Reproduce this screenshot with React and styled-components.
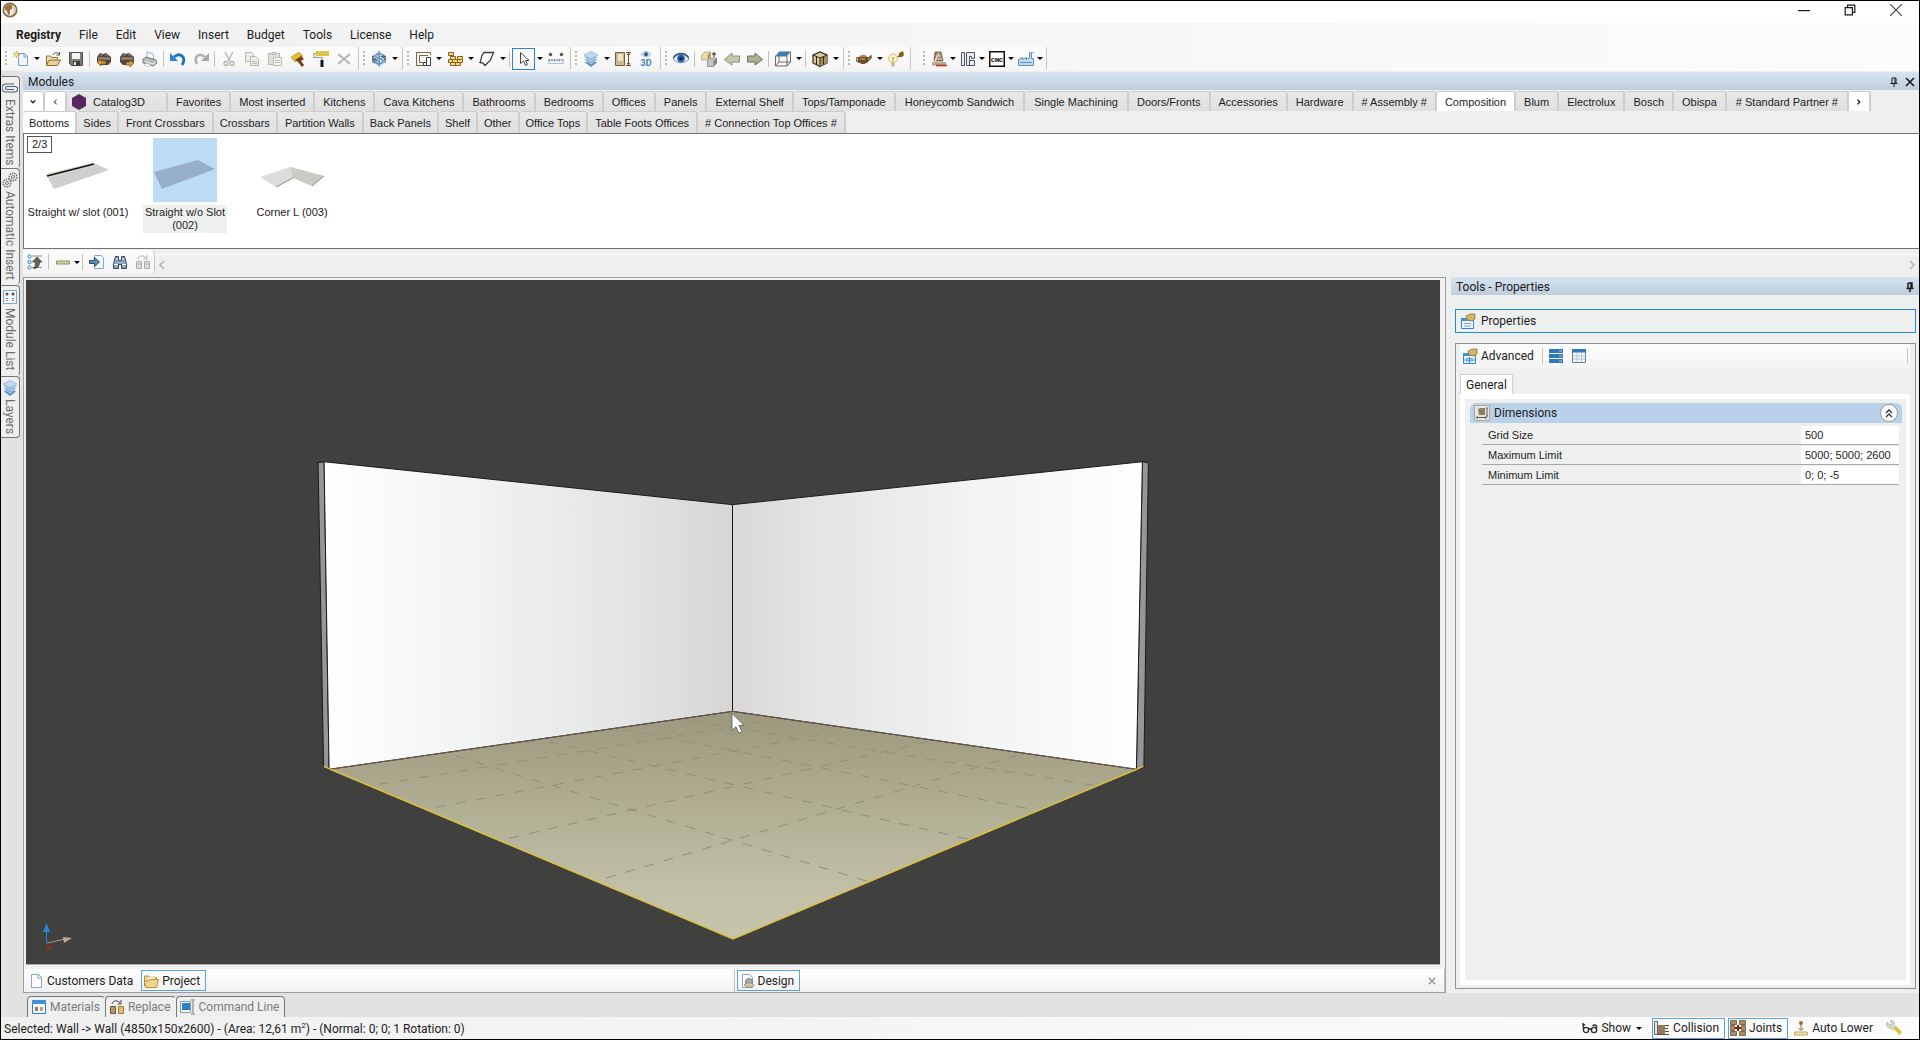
import React from "react";
import styled, { createGlobalStyle } from "styled-components";

const UI = `Roboto, "Open Sans", sans-serif`;
const SANS = `"Liberation Sans", Arial, sans-serif`;

const Global = createGlobalStyle`
  * { box-sizing: border-box; }
  body { margin: 0; background: #eef0ef; font: 12px/16px ${UI}; color: #1c1c1c; }
  button { border: 0; background: none; padding: 0; margin: 0; font: inherit; color: inherit; white-space: nowrap; }
  svg { display: block; flex: none; }
`;

/* ---------- icons ---------- */

const Blocks = ({ c }) => (
  <>
    <path d="M1 6l3-4 3 1 3-1 5 4v5l-3 3H4l-3-3z" fill="#4d4740" />
    <path d="M2 6h12v3H2z" fill="#877c6d" />
    <path d="M4 4h3M9 4h3" stroke="#a08b67" />
    <path d={c} fill="#d99a3e" stroke="#7c4a18" strokeWidth=".7" />
  </>
);

const Page = () => (
  <path d="M3.5 1.5h7l3 3v10h-10z" fill="#fbfdff" stroke="#8aa6c4" />
);

const Stack = () => (
  <>
    <path d="M8 8l6 3.500-6 4.500-6-4.500z" fill="#5e8fc0" />
    <path d="M8 5.500l6.500 3-6.500 4.500-6.500-4.500z" fill="#7ba7d4" stroke="#e4eef8" strokeWidth=".6" />
    <path d="M8 3l7 3-7 4.500L1 6z" fill="#98bce0" stroke="#e4eef8" strokeWidth=".6" />
    <path d="M8 .5l7 3.500-7 4L1 4z" fill="#c4d9ef" stroke="#7fa6ce" strokeWidth=".6" />
  </>
);

const FormIcon = () => (
  <>
    <path d="M1.500 5.500h12v10h-12z" fill="#eef6fc" stroke="#2f86cc" />
    <path d="M1 5h13v3H1z" fill="#3f93d5" />
    <path d="M4 10.500h7M4 13h7" stroke="#6fa8d6" />
    <path d="M6 3l4-2h5v5l-3 2-5-1z" fill="#d9b45f" stroke="#7d6840" strokeWidth=".7" />
  </>
);

const ICONS = {
  app: (
    <>
      <circle cx="8" cy="8" r="7.500" fill="#8d6a45" />
      <circle cx="8" cy="8" r="5.800" fill="#f5efe6" />
      <path d="M3 5l4-3 3 1v4l-2 1v4l-2 1-1-4-2-1z" fill="#9b7448" />
      <path d="M10 4c3 2 3 6 0 9" stroke="#c7a886" fill="none" />
    </>
  ),
  newdoc: (
    <>
      <path d="M5.500 2.500h6l3 3v9h-9z" fill="#eef5fc" stroke="#7c9dc0" />
      <path d="M11 2v4h4" fill="none" stroke="#7c9dc0" />
      <path d="M3.500 0v7M0 3.500h7M1 1l5 5M6 1L1 6" stroke="#d9a92e" />
      <circle cx="3.500" cy="3.500" r="1.300" fill="#fff2b0" />
    </>
  ),
  open: (
    <>
      <path d="M1.500 14V5h4l1 1.500h6V9" fill="#f6e3b4" stroke="#8b6c35" />
      <path d="M1.500 14.500L4 9h11.500l-3 5.500z" fill="#e8cf98" stroke="#8b6c35" />
      <path d="M8 4c2-3 4-3 6-1M14.500 1v3h-3" fill="none" stroke="#4a4a4a" />
    </>
  ),
  save: (
    <>
      <path d="M1.500 1.500h13v13h-11l-2-2z" fill="#7d7d78" stroke="#4d4d49" />
      <path d="M4 2h8v6H4z" fill="#f4f4f0" />
      <path d="M5 10h7v4.500H5z" fill="#3f3f3c" />
      <path d="M6 11h2v3H6z" fill="#e9e9e4" />
    </>
  ),
  blockL: <Blocks c="M1 11l4-3v2h5v3H5v2z" />,
  blockR: <Blocks c="M15 12l-4-3v2H7v3h4v2z" />,
  print: (
    <>
      <path d="M5 1l6 2 1 5-7-1z" fill="#f6fbff" stroke="#83a6c6" strokeWidth=".8" />
      <path d="M1 8l3-2 10 3 1 3-4 3-10-3z" fill="#b8b8b4" stroke="#6b6b68" strokeWidth=".8" />
      <path d="M3 10l8 3 3-2" stroke="#f4f4f0" fill="none" />
      <path d="M4 12l5 2-2 2-5-2z" fill="#fff" stroke="#8aa" strokeWidth=".5" />
    </>
  ),
  undo: (
    <>
      <path d="M4 6c6-5 13 0 8 8" fill="none" stroke="#1f72bd" strokeWidth="2.800" />
      <path d="M0 2v8h8z" fill="#2a80cc" />
    </>
  ),
  redo: (
    <>
      <path d="M12 6C6 1 0 6 4 13" fill="none" stroke="#b3b3b3" strokeWidth="2.800" />
      <path d="M16 2v8H8z" fill="#a9a9a9" />
    </>
  ),
  cut: (
    <g fill="none" stroke="#b4b4ae" strokeWidth="1.300">
      <path d="M4 1l5 9M12 1L7 10" />
      <circle cx="5" cy="12.500" r="2" />
      <circle cx="11" cy="12.500" r="2" />
    </g>
  ),
  copy: (
    <g fill="#ecece8" stroke="#b9b9af">
      <path d="M1.500 1.500h6l2 2v7h-8z" />
      <path d="M6.500 5.500h5l3 3v6h-8z" />
      <path d="M8 10.500h5M8 12.500h5" />
    </g>
  ),
  paste: (
    <g fill="#e0e0da" stroke="#b9b9af">
      <path d="M1.500 2.500h11v11h-11z" />
      <path d="M5 1.500h4v2H5z" />
      <path d="M6.500 6.500h8v8h-8z" fill="#f4f4f0" />
      <path d="M8 9.500h5M8 11.500h5" />
    </g>
  ),
  brush: (
    <>
      <path d="M1 6l8-5 4 4-8 6z" fill="#dcbf35" stroke="#a48b20" strokeWidth=".6" />
      <path d="M5 9l6-4 3 3-3 2 3 4-2 2-4-5z" fill="#7c3e1a" />
    </>
  ),
  roller: (
    <>
      <path d="M3 0h13v5H3z" fill="#dcc644" />
      <path d="M3 2.500H1v4h8v3" stroke="#9a9a9a" fill="none" strokeWidth="1.200" />
      <path d="M7.500 9h3v7h-3z" fill="#181818" />
    </>
  ),
  del: <path d="M2 3l12 10M14 3L2 13" stroke="#b4b4ae" strokeWidth="1.800" />,
  dollar: (
    <>
      <path d="M1 5l7-3 7 3v6l-7 4-7-4z" fill="#4f6072" />
      <path d="M1 7h14M1 10h14" stroke="#9fb2c5" />
      <path d="M12 4C9 2 4.500 2.500 4.500 5s7.500 2 7.500 5-5 3.500-8 1.500M8.200 0v15.500" stroke="#e6eff8" strokeWidth="3" fill="none" />
      <path d="M12 4C9 2 4.500 2.500 4.500 5s7.500 2 7.500 5-5 3.500-8 1.500M8.200 0v15.500" stroke="#5f94ca" strokeWidth="1.600" fill="none" />
    </>
  ),
  walls: (
    <>
      <path d="M15.500 4V1.500h-14v13H8M13 4.500H4.500v7H8" fill="none" stroke="#77664a" />
      <path d="M8.500 14.500v-3h3v-5h4v8zM11.500 11.500v3" fill="#fff" stroke="#3c3c3c" />
    </>
  ),
  bricks: (
    <g fill="#efd68b" stroke="#8d6415">
      <path d="M1.500 1.500h5v3h-5zM3.500 5.500h5v3h-5zM10.500 5.500h5v3h-5zM1.500 8.500h4v3h-4zM5.500 8.500h5v3h-5zM10.500 8.500h5v3h-5zM3.500 11.500h5v3h-5zM8.500 11.500h5v3h-5z" />
    </g>
  ),
  shape: <path d="M5 1.500h9.500L11.500 9 6 14.500l-2-2.500-3-.5C2.500 9 1.500 5 5 1.500z" fill="#fff" stroke="#3c3c3c" strokeWidth="1.300" />,
  pointer: <path d="M4.500 1.500v11l3-2.500 2 4.500 2-1-2-4h3.500z" fill="#fff" stroke="#444" />,
  measure: (
    <>
      <circle cx="2.500" cy="3.500" r="1.700" fill="#6d4a33" />
      <circle cx="13.500" cy="3.500" r="1.700" fill="#6d4a33" />
      <path d="M.5 8.500h15v4H.5z" fill="#f3f5f7" stroke="#b3bfcb" />
      <path d="M1 9.500h15" stroke="#3c6285" strokeDasharray="1 1.500" strokeWidth="1.500" />
    </>
  ),
  layers: <Stack />,
  height: (
    <>
      <path d="M.500 1.500h9v13h-9z" fill="#c9b98d" stroke="#6e613f" />
      <path d="M3 3h5v7H3z" fill="#efe6c6" />
      <path d="M11 1.500h5M11 14.500h5M13.500 3v10M12 4l1.500-2L15 4M12 12l1.500 2 1.500-2" stroke="#8a4a1e" fill="none" />
    </>
  ),
  threeD: (
    <>
      <path d="M3 3.500c3-4 7-4 10 0-3 3-7 3-10 0z" fill="#cfe2f4" stroke="#7ba6ce" strokeWidth=".6" />
      <circle cx="8" cy="3.300" r="2" fill="#1f5f9c" />
      <text x="8" y="15" textAnchor="middle" fontFamily="Roboto, sans-serif" fontSize="9" fontWeight="700" fill="#3f82bd">3D</text>
    </>
  ),
  eye: (
    <>
      <path d="M0 8c4-6 12-6 16 0-4 5-12 5-16 0z" fill="#e8eff6" stroke="#5d7b99" strokeWidth=".8" />
      <path d="M0 7c4-6 12-6 16 0" fill="none" stroke="#31506d" strokeWidth="1.300" />
      <circle cx="8" cy="7.500" r="3.800" fill="#1d62ad" />
      <circle cx="8" cy="7.500" r="1.700" fill="#0a2546" />
    </>
  ),
  boxes: (
    <>
      <path d="M.5 4l3-3h6v5l-3 3h-6z" fill="#ecd9ae" stroke="#a98c52" strokeWidth=".6" />
      <path d="M6.500 4l3-3v5l-3 3z" fill="#b8954f" />
      <path d="M6.500 10l3-3h6v5l-3 3.500h-6z" fill="#c4c4c4" stroke="#666" strokeWidth=".6" />
      <path d="M12.500 10l3-3v5l-3 3.500z" fill="#7d7d7d" />
      <path d="M11 3h4M13 1v5" stroke="#222" />
    </>
  ),
  left: <path d="M15.500 5H8V2L.500 8.500 8 14v-3h7.500z" fill="#c6c7ae" stroke="#8b8c78" />,
  right: <path d="M.500 5H8V2l7.500 6.500L8 14v-3H.500z" fill="#aeb08f" stroke="#6d6e58" />,
  cube: (
    <>
      <path d="M4 1h11.500L12 5H.500z" fill="#2a80cc" />
      <path d="M.500 5H12v10H.500zM4 1h11.500v10L12 15M.500 15L4 11h11.500M4 1v10" fill="none" stroke="#6e6e6e" />
    </>
  ),
  wood: (
    <>
      <path d="M1 4l7-3 7 3v8l-7 3.500L1 12z" fill="#dccb9a" stroke="#2c2a24" strokeWidth="1.200" />
      <path d="M8 7l7-3v8l-7 3.500z" fill="#a8905a" />
      <path d="M1 4l7 3 7-3M8 7v8M4.500 5.500v8M11.500 5.500v8" stroke="#2c2a24" fill="none" />
    </>
  ),
  teapot: (
    <>
      <path d="M2 6h10c1 5-2 7-5 7s-6-2-5-7z" fill="#6e4a2c" />
      <path d="M11 8l4-3v2l-4 4zM2 7C-1 6-1 10 3 11" fill="none" stroke="#6e4a2c" strokeWidth="1.300" />
      <path d="M3 6c2-3 7-3 8 0z" fill="#b08a5f" />
      <path d="M4 8h5" stroke="#d8b78c" />
    </>
  ),
  bulb: (
    <>
      <circle cx="5" cy="7.500" r="4.300" fill="#fff9dc" stroke="#dcb955" />
      <path d="M3.500 12h3v3.500h-3z" fill="#b9b39a" />
      <path d="M5 11V7M3.500 6L5 7.500 6.500 6" stroke="#c8962a" fill="none" />
      <path d="M9 6l2-2V2l4-2 1 4-2 2h-3z" fill="#8a5a1c" />
    </>
  ),
  saw: (
    <>
      <path d="M4 1h6l2 9H3z" fill="#9c8465" stroke="#5b4a33" strokeWidth=".7" />
      <path d="M2 14L8 2M5 5h5M4 8h7" stroke="#e6ddc8" strokeWidth="1.200" />
      <path d="M1 11h14v3.500H1z" fill="#bda98c" />
      <path d="M5 14.500h11" stroke="#b53424" strokeWidth="1.600" />
    </>
  ),
  plan: (
    <g fill="#eceff2" stroke="#4c5560">
      <path d="M1.500 1.500h3v13h-3zM6.500 1.500h8v6h-3v-2h-2v9h-3zM9.500 9.500h5v5h-5z" />
    </g>
  ),
  cnc: (
    <>
      <path d="M.75 .75h14.500v14.500H.75z" fill="#fff" stroke="#111" strokeWidth="1.500" />
      <text x="8" y="10.500" textAnchor="middle" fontFamily="Roboto, sans-serif" fontSize="6" fontWeight="900" fill="#111">CNC</text>
    </>
  ),
  factory: (
    <>
      <path d="M.500 14.500v-6l4-2v2l4-2v2l3-1.500V1.500h2v6h2v7z" fill="#c4dbf0" stroke="#5f8fba" />
      <path d="M2 11.500h12" stroke="#5f8fba" />
      <path d="M11 1.500h5" stroke="#8db4d6" strokeDasharray="2 1" />
    </>
  ),
  sortUp: (
    <>
      <g fill="#fff" stroke="#2a80cc">
        <circle cx="2.500" cy="2.500" r="1.600" />
        <circle cx="2.500" cy="8" r="1.600" />
        <circle cx="2.500" cy="13.500" r="1.600" />
      </g>
      <path d="M5 2h10M5 13.500h10" stroke="#8a8a8a" />
      <path d="M10 3l5 5h-2.500c0 4-2 6.500-6 6.500 2-2 2-4 2-6.500H5.500z" fill="#6b6250" stroke="#37332a" strokeWidth=".7" />
    </>
  ),
  plank: <path d="M1.500 7h13v3h-13z" fill="#d9cf9e" stroke="#97906a" />,
  goto: (
    <>
      <path d="M5.500 1.500h7l2 2v11h-9z" fill="#f2f7fc" stroke="#8aa6c4" />
      <path d="M.500 6.500h5v-3l5 4.500-5 4.500v-3h-5z" fill="#5d89b3" stroke="#2c4e6e" />
    </>
  ),
  binoc: (
    <g fill="#8fa5bf" stroke="#33475f">
      <path d="M3.500 2.500h3v4h3v-4h3l2 7v5h-5v-4h-3v4h-5v-5z" />
      <path d="M2 10.500h4M10 10.500h4M4 5h2M10 5h2" stroke="#fff" />
    </g>
  ),
  replaceOff: (
    <g fill="#dcdcda" stroke="#b0b0ae">
      <path d="M1.500 7.500h5v7h-5zM9.500 7.500h5v7h-5zM1.500 10h5M9.500 10h5" />
      <path d="M3 5c1-4 6-4 8-1M12 1v4H8.500" fill="none" />
    </g>
  ),
  hexagon: <path d="M8 0l7 4v8l-7 4-7-4V4z" fill="#56285f" />,
  clip: <path d="M12 4H4a4 4 0 000 8h9a2.700 2.700 0 000-5.500H5a1.500 1.500 0 000 3h7" fill="none" stroke="#4a607c" strokeWidth="1.200" />,
  gears: (
    <g fill="none" stroke="#7a7a7a">
      <circle cx="11" cy="5" r="3.800" strokeDasharray="1.500 .8" strokeWidth="1.600" />
      <circle cx="11" cy="5" r="1.500" />
      <circle cx="5" cy="11" r="3.800" strokeDasharray="1.500 .8" strokeWidth="1.600" />
      <circle cx="5" cy="11" r="1.500" />
    </g>
  ),
  modlist: (
    <>
      <path d="M1.500 1.500h13v13h-13z" fill="#f2f8fd" stroke="#7fa9d0" />
      <circle cx="5" cy="5" r="1.500" fill="#5d4a45" />
      <circle cx="11" cy="5" r="1.500" fill="#5d4a45" />
      <path d="M4 9.500h2M4 11.500h2M10 9.500h2M10 11.500h2" stroke="#7e8b98" />
    </>
  ),
  page: (
    <>
      <Page />
      <path d="M10 1.500v3.500h3.500" fill="none" stroke="#8aa6c4" />
    </>
  ),
  folder: (
    <>
      <path d="M1.500 13V3h4l1 1.500h7V7" fill="#f3dfae" stroke="#b8903d" />
      <path d="M4 4h8v4H4z" fill="#fff8e0" stroke="#c9a75a" strokeWidth=".6" />
      <path d="M2.500 14.500L1.500 8h4l1-1.500h9l-2 8z" fill="#f0d489" stroke="#b8903d" />
    </>
  ),
  design: (
    <>
      <Page />
      <circle cx="10" cy="9" r="3.500" fill="#a9b1b8" stroke="#6b7681" />
      <path d="M5 12c2-3 8-3 10 0-1 3-8 3-10 0z" fill="#d3c3a0" stroke="#7d7052" strokeWidth=".6" />
    </>
  ),
  materials: (
    <>
      <path d="M1.500 1.500h13v13h-13z" fill="#f2f8fd" stroke="#2a80cc" />
      <path d="M1 1h14v4H1z" fill="#3f93d5" />
      <path d="M4 8h3v4H4z" fill="#8f7a5c" />
      <path d="M9 8h3v4H9z" fill="#c9a468" />
    </>
  ),
  replace: (
    <>
      <path d="M1.500 7.500h5v7h-5z" fill="#b09a6c" stroke="#6b5a36" />
      <path d="M9.500 7.500h5v7h-5z" fill="#e0bf7e" stroke="#9b7a3a" />
      <path d="M3 5c1-4 6-4 8-1M12 1v4H8.500" fill="none" stroke="#444" />
    </>
  ),
  command: (
    <>
      <path d="M.500 2.500h10v11H.500z" fill="#fff" stroke="#8a9bab" />
      <path d="M2 4h8v7H2z" fill="#2a80cc" />
      <path d="M13 2v12M11 1h2M13 1h2M11 15h2M13 15h2" stroke="#777" />
    </>
  ),
  glasses: (
    <g fill="none" stroke="#2e2e2e" strokeWidth="1.400">
      <circle cx="4" cy="10" r="2.600" />
      <circle cx="12" cy="10" r="2.600" />
      <path d="M6.500 9.500c1-1 2-1 3 0M1.500 9L1 4l2 1M14.500 9V6c-1-1-2-2-4 0" />
    </g>
  ),
  collision: (
    <>
      <path d="M.500 1.500h3v13h-3z" fill="#e9e6df" stroke="#6f6a5e" />
      <path d="M4 5h7v9H4z" fill="#8c7c62" />
      <path d="M11 5.500h4M11 8.500h3M11 11.500h4M3 14.500h12" stroke="#5d5242" />
    </>
  ),
  joints: (
    <>
      <path d="M.500 .5h6v4h-6zM9.500 .5h6v4h-6zM.500 11.500h6v4h-6zM9.500 11.500h6v4h-6zM.500 5.500h4v5h-4zM11.500 5.500h4v5h-4z" fill="#a88c68" stroke="#6f5330" strokeWidth=".8" />
      <path d="M8 5v6M5 8h6" stroke="#7c1f1a" strokeWidth="2" />
    </>
  ),
  lower: (
    <>
      <circle cx="8" cy="3" r="2" fill="#9a6a3c" />
      <path d="M8 4v6M5.500 8L8 10.500 10.500 8" stroke="#9a6a3c" fill="none" />
      <path d="M1.500 12h13v3h-13z" fill="#f3e6a8" stroke="#b39a45" strokeWidth=".8" />
    </>
  ),
  wrench: (
    <>
      <path d="M1 2l3 3 2-2-2-2c4-1 5 2 4 4l2 2-3 3-2-2C1 9 0 5 1 2z" fill="#d7d7d2" stroke="#a3a39d" strokeWidth=".6" />
      <path d="M8 9l2.500-2.500L16 12l-2.500 3z" fill="#dcc02f" />
    </>
  ),
  props: <FormIcon />,
  advanced: (
    <>
      <FormIcon />
      <path d="M7.500 9v6M2 12h11" stroke="#3f93d5" />
    </>
  ),
  rows: (
    <>
      <path d="M1 1h14v4H1zM1 6h14v4H1zM1 11h14v4H1z" fill="#2f77b8" />
      <path d="M11 3h3M11 8h3M11 13h3" stroke="#a9cdec" />
    </>
  ),
  tableview: (
    <>
      <path d="M1.500 1.500h13v13h-13z" fill="#f5f8fb" stroke="#6a7f93" />
      <path d="M1 1h14v3.500H1z" fill="#2f77b8" />
      <path d="M6 5v9M10.500 5v9M2 8h12M2 11h12" stroke="#b6c3cf" />
    </>
  ),
  dims: (
    <>
      <path d="M.500 .5h15v15H.500z" fill="#e9e7e2" stroke="#a9a59d" />
      <path d="M4 4l2-1h5v7H5z" fill="#8f7c60" />
      <path d="M13 3v8M3 12.500h9M3 11v3M12 11v3M12 3h2M12 11h2" stroke="#5b5b5b" fill="none" />
    </>
  ),
};

const Icon = ({ name, size = 16 }) => (
  <svg width={size} height={size} viewBox="0 0 16 16" aria-hidden="true">
    {ICONS[name]}
  </svg>
);

const Glyph = ({ d, size = 10, color = "#1a1a1a", weight = 1 }) => (
  <svg width={size} height={size} viewBox="0 0 10 10" aria-hidden="true">
    <path d={d} fill="none" stroke={color} strokeWidth={weight} />
  </svg>
);

const PIN = "M3 1h4v5M3 1v5M1.500 6.500h7M5 7v3M6 1v5";
const CROSS = "M1 1l8 8M9 1l-8 8";

/* ---------- window frame ---------- */

const Window = styled.div`
  display: flex;
  flex-direction: column;
  height: 100vh;
  border: 1px solid #000;
  overflow: hidden;
`;

const TitleBar = styled.header`
  display: flex;
  justify-content: space-between;
  align-items: center;
  height: 22px;
  padding: 0 17px 4px 1px;
  background: #fff;
`;

const WindowButtons = styled.div`
  display: flex;
  gap: 34px;
`;

const MenuBar = styled.nav`
  display: flex;
  align-items: center;
  gap: 18px;
  height: 24px;
  padding: 0 15px;
  background: linear-gradient(90deg, #f0f0f0, #fcfcfc);
`;

const MenuItem = styled.button`
  font-weight: ${(p) => (p.$bold ? 700 : 400)};
`;

const ToolBar = styled.div`
  display: flex;
  height: 24px;
  background: linear-gradient(90deg, #f0f0f0, #fcfcfc);
`;

const ToolGroup = styled.div`
  position: relative;
  display: flex;
  align-items: center;
  height: 23px;
  margin-left: ${(p) => (p.$apart ? 8 : 0)}px;
  padding: 0 3px 0 8px;
  border-right: 1px solid #c6c6bf;
  border-radius: 3px;
  background: linear-gradient(#fcfcfc, #f4f4f4);

  &::before {
    content: "";
    position: absolute;
    left: 4px;
    top: 4px;
    width: 2px;
    height: 15px;
    background: repeating-linear-gradient(#bdbda6 0 2px, transparent 2px 4px);
  }
`;

const ToolButton = styled.button`
  display: flex;
  align-items: center;
  justify-content: center;
  width: 23px;
  height: 22px;
  border: 1px solid ${(p) => (p.$on ? "#2a86d1" : "transparent")};
`;

const DropButton = styled.button`
  width: ${(p) => (p.$tight ? 6 : 9)}px;
  height: 22px;
  display: flex;
  align-items: center;
  justify-content: center;

  &::before {
    content: "";
    border: 3px solid transparent;
    border-top-color: #000;
    border-bottom-width: 0;
  }
`;

const Rule = styled.span`
  width: 1px;
  height: 16px;
  margin: 0 2px;
  background: #c5c5b4;
`;

/* ---------- docks ---------- */

const Body = styled.div`
  flex: 1;
  min-height: 0;
  display: flex;
`;

const SideDock = styled.aside`
  width: 22px;
  flex: none;
  padding-top: 5px;
  background: #e2e2e2;
`;

const SideTab = styled.button`
  display: flex;
  flex-direction: column;
  align-items: center;
  gap: 3px;
  width: 19px;
  height: ${(p) => p.$h}px;
  padding-top: 3px;
  border: 1px solid #777;
  border-left: 0;
  border-bottom-color: ${(p) => (p.$last ? "#777" : "transparent")};
  border-radius: 0 4px 4px 0;
  background: #eeefee;
  color: #6d6d6d;

  span {
    writing-mode: vertical-rl;
    line-height: 14px;
  }
`;

const Content = styled.main`
  flex: 1;
  min-width: 0;
  display: flex;
  flex-direction: column;
`;

const PanelTitle = styled.h2`
  display: flex;
  align-items: center;
  gap: 6px;
  height: 18px;
  margin: ${(p) => (p.$top ? "1px 0" : "0")};
  padding: 2px 4px 0 5px;
  background: linear-gradient(#d7e4f1, #bfccdb);
  font: 12px/16px ${UI};

  span {
    flex: 1;
  }
`;

const TabRow = styled.div`
  display: flex;
  height: ${(p) => (p.$second ? 22 : 20)}px;
  font: 11px/14px ${SANS};
`;

const Tab = styled.button`
  display: flex;
  align-items: center;
  justify-content: center;
  padding: 0 ${(p) => p.$pad}px;
  border: 1px solid #cdcdcd;
  border-width: 1px 2px 0 0;
  border-radius: 3px 3px 0 0;
  background: ${(p) => (p.$on || p.$nav ? "#fff" : "linear-gradient(#e9e9e9, #dfdfdf)")};
`;

const CatalogTab = styled(Tab)`
  justify-content: flex-start;
  gap: 6px;
  width: 101px;
`;

const ModuleList = styled.section`
  display: flex;
  align-items: flex-start;
  height: 116px;
  padding: 2px 4px;
  border: 1px solid #737373;
  border-width: 1px 0 1px 1px;
  background: #fff;
  font: 11px/13px ${SANS};
`;

const Counter = styled.output`
  position: absolute;
  left: -1px;
  top: 0;
  padding: 0 4px 1px;
  border: 1px solid #555;
  background: #fff;
  line-height: 14px;
`;

const ModuleGrid = styled.div`
  position: relative;
  display: flex;
  gap: 7px;
`;

const Module = styled.button`
  display: flex;
  flex-direction: column;
  align-items: center;
  gap: 3px;
  width: 100px;
  padding-top: 2px;

  svg {
    background: ${(p) => (p.$on ? "#bcdcf4" : "transparent")};
  }

  span {
    width: ${(p) => (p.$on ? "84px" : "auto")};
    padding: 1px 0;
    min-height: 28px;
    background: ${(p) => (p.$on ? "#eef0ef" : "transparent")};
    white-space: ${(p) => (p.$on ? "normal" : "nowrap")};
  }
`;

const ModuleTools = styled.div`
  display: flex;
  height: 28px;
  padding-top: 1px;
`;

const ModuleToolGroup = styled.div`
  display: flex;
  align-items: center;
  height: 24px;
  border-right: 1px solid #c6c6bf;
  border-radius: 0 4px 4px 0;
  background: linear-gradient(#fcfcfc, #f4f4f4);
`;

const ScrollTrack = styled.div`
  flex: 1;
  display: flex;
  align-items: center;
  justify-content: space-between;
  margin-top: 4px;
  padding: 0 2px 2px;
  border-top: 1px solid #fff;
`;

/* ---------- document area ---------- */

const WorkRow = styled.div`
  flex: 1;
  min-height: 0;
  display: flex;
  gap: 5px;
`;

const DocFrame = styled.section`
  flex: 1;
  min-width: 0;
  display: flex;
  flex-direction: column;
  border: 1px solid #9d9d9d;
  background: #f1f1f1;
`;

const Viewport = styled.div`
  flex: 1;
  min-height: 0;
  margin: 2px 5px 0 2px;
  border-bottom: 1px solid #a9a9a9;
  background: #40403e;

  svg {
    width: 100%;
    height: 100%;
  }
`;

const DocTabs = styled.div`
  display: flex;
  height: 27px;
  padding-top: 4px;
`;

const DocTabGroup = styled.div`
  flex: 1 1 0;
  display: flex;
  align-items: center;
  gap: 2px;
  padding: 0 8px 0 2px;
  border-right: 1px solid #c2c2c2;
  background: linear-gradient(#fdfdfd, #f2f2f2);
`;

const LabelButton = styled.button`
  display: flex;
  align-items: center;
  gap: 3px;
  height: 21px;
  padding: 0 5px 0 1px;
  border: 1px solid ${(p) => (p.$on ? "#5aa2de" : "transparent")};
  color: #222;
`;

const Spacer = styled.span`
  flex: 1;
`;

const BottomDock = styled.div`
  display: flex;
  align-items: flex-start;
  height: 24px;
  padding: 3px 4px 0;
  background: #e2e2e2;
`;

const DockTab = styled.button`
  display: flex;
  align-items: center;
  gap: 3px;
  height: 21px;
  padding: 0 4px 0 3px;
  border: 1px solid #777;
  border-bottom: 0;
  border-right-color: ${(p) => (p.$last ? "#777" : "transparent")};
  border-radius: 4px 4px 0 0;
  background: #eeefee;
  color: #7b7b7b;
`;

const StatusBar = styled.footer`
  display: flex;
  align-items: center;
  gap: 3px;
  height: 22px;
  padding: 0 14px 0 3px;
  background: linear-gradient(90deg, #f0f0f0, #fcfcfc);

  output {
    flex: 1;
    padding-top: 1px;
  }

  sup {
    font-size: 8px;
    line-height: 0;
  }
`;

/* ---------- properties ---------- */

const Properties = styled.aside`
  display: flex;
  flex-direction: column;
  width: 468px;
  flex: none;
  padding-bottom: 4px;
`;

const PropsTitle = styled.button`
  display: flex;
  align-items: center;
  gap: 5px;
  height: 24px;
  margin: 14px 3px 10px 4px;
  padding: 0 4px;
  border: 1px solid #2a86d1;
`;

const PropsBox = styled.div`
  flex: 1;
  display: flex;
  flex-direction: column;
  margin: 0 3px 0 4px;
  padding: 0 5px 3px 4px;
  border: 1px solid #8d9196;
`;

const PropsTools = styled.div`
  display: flex;
  align-items: center;
  height: 24px;
  margin-bottom: 6px;
  background: linear-gradient(#fdfdfd, #f3f4f3);
`;

const PropsTab = styled.button`
  align-self: flex-start;
  height: 20px;
  padding: 0 5px;
  border: 1px solid #d0d0d0;
  border-bottom: 0;
  background: #fff;
`;

const PropsPage = styled.div`
  flex: 1;
  padding: 4px 4px 4px 5px;
  border: 5px solid #fff;
  border-right-width: 4px;
  background: #eef0ef;
`;

const SectionHead = styled.button`
  display: flex;
  align-items: center;
  gap: 4px;
  width: 100%;
  height: 20px;
  margin-bottom: 2px;
  padding: 0 4px;
  border-radius: 6px 6px 0 0;
  background: #b9d1e9;
`;

const Collapse = styled.span`
  display: flex;
  align-items: center;
  justify-content: center;
  width: 18px;
  height: 18px;
  border: 1px solid #9a9a9a;
  border-radius: 50%;
  background: #fff;
`;

const PropRow = styled.div`
  display: flex;
  height: 20px;
  margin: 0 3px 0 12px;
  border-bottom: 1px solid #a9a9a9;
  font: 11px/20px ${SANS};

  label {
    flex: 1;
    padding-left: 6px;
  }

  input {
    width: 98px;
    height: 18px;
    margin-top: 1px;
    padding: 0 4px;
    border: 0;
    background: #fff;
    font: inherit;
    color: inherit;
  }
`;

/* ---------- data ---------- */

const MENUS = ["Registry", "File", "Edit", "View", "Insert", "Budget", "Tools", "License", "Help"];

const TOOLS = [
  { items: ["newdoc>", "open", "save", "|", "blockL", "blockR", "print", "|", "undo", "redo", "|", "cut", "copy", "paste", "brush", "roller", "del"] },
  { items: ["dollar>"] },
  { items: ["walls>", "bricks>", "shape>", "|", "pointer*>", "measure"] },
  { items: ["layers>", "height", "threeD"] },
  { items: ["eye", "|", "boxes", "left", "right", "|", "cube>", "|", "wood>"] },
  { items: ["teapot>", "bulb"] },
  { items: ["saw>", "plan>", "cnc>", "factory>"], apart: true, tight: true },
];

const CATALOGS = [
  "Favorites", "Most inserted", "Kitchens", "Cava Kitchens", "Bathrooms", "Bedrooms", "Offices", "Panels",
  "External Shelf", "Tops/Tamponade", "Honeycomb Sandwich", "Single Machining", "Doors/Fronts", "Accessories",
  "Hardware", "# Assembly #", "Composition", "Blum", "Electrolux", "Bosch", "Obispa", "# Standard Partner #",
];

const GROUPS = [
  "Bottoms", "Sides", "Front Crossbars", "Crossbars", "Partition Walls", "Back Panels", "Shelf", "Other",
  "Office Tops", "Table Foots Offices", "# Connection Top Offices #",
];

/* Long captions get one more pixel of room on each side. */
const tabPad = (base, text) => (text.length > 14 ? base + 1 : base);

const SIDE = [
  { name: "Extras Items", icon: "clip", h: 92 },
  { name: "Automatic Insert", icon: "gears", h: 117 },
  { name: "Module List", icon: "modlist", h: 91 },
  { name: "Layers", icon: "layers", h: 62 },
];

const VALUES = [
  ["Grid Size", "500"],
  ["Maximum Limit", "5000; 5000; 2600"],
  ["Minimum Limit", "0; 0; -5"],
];

/* Floor grid lines: x1, y1, x2, y2 */
const GRID = [
  [606, 879, 1024, 754], [509, 839, 929, 742], [436, 808, 833, 733], [379, 785, 760, 723],
  [867, 882, 449, 755], [968, 840, 547, 742], [1027, 809, 625, 730], [1094, 786, 693, 722],
];

/* ---------- drawings ---------- */

const Room = () => (
  <svg viewBox="26 280 1414 685" role="img" aria-label="3D view of a room corner">
    <defs>
      <linearGradient id="wl" x1="0" x2="1">
        <stop offset="0" stopColor="#fff" />
        <stop offset=".3" stopColor="#f4f5f5" />
        <stop offset=".7" stopColor="#e5e6e6" />
        <stop offset="1" stopColor="#d7d6d5" />
      </linearGradient>
      <linearGradient id="wr" x1="0" x2="1">
        <stop offset="0" stopColor="#dad9d7" />
        <stop offset=".2" stopColor="#e3e4e4" />
        <stop offset=".6" stopColor="#f2f3f3" />
        <stop offset="1" stopColor="#fff" />
      </linearGradient>
      <linearGradient id="fl" x1="0" x2="0" y1="0" y2="1">
        <stop offset="0" stopColor="#9c987e" />
        <stop offset=".45" stopColor="#b1af94" />
        <stop offset=".8" stopColor="#c2c0a7" />
        <stop offset="1" stopColor="#c6c4ab" />
      </linearGradient>
    </defs>
    <path d="M733 712L1144 768 733 940 323 768z" fill="url(#fl)" />
    <g stroke="#8f8f77" strokeDasharray="10 10">
      {GRID.map(([a, b, c, d]) => (
        <line key={a} x1={a} y1={b} x2={c} y2={d} />
      ))}
    </g>
    <path d="M317.500 463l6-1 5 308-5.500-2z" fill="#97949b" stroke="#1a1a1a" />
    <path d="M1149 463l-6-1-6 308 7.500-2z" fill="#97949b" stroke="#1a1a1a" />
    <path d="M323.500 462l409 43v207l-404 58z" fill="url(#wl)" stroke="#1a1a1a" />
    <path d="M1143 462L732.500 505v207l404.500 58z" fill="url(#wr)" stroke="#1a1a1a" />
    <path d="M329 770l404-58 404 58" fill="none" stroke="#6a5d50" />
    <path d="M323 767l410 173 411-173" fill="none" stroke="#e0c02c" strokeWidth="1.300" />
    <path d="M732 714v17l4-3.500 3 6.500 3-1.500-3-6.500h5z" fill="#fff" stroke="#555" strokeWidth=".8" />
    <path d="M45.500 944v-14" stroke="#2a86d8" />
    <path d="M45.500 924l3.500 9h-7z" fill="#2a86d8" />
    <path d="M46 944l18-4" stroke="#a89a84" />
    <path d="M62 938l9 1-8 5z" fill="#b8ae98" />
    <path d="M45 946l4 0 3 2-3 3h-4z" fill="#7c3030" />
  </svg>
);

const Thumb = ({ children }) => (
  <svg width="64" height="64" viewBox="0 0 64 64" aria-hidden="true">
    {children}
  </svg>
);

const Tool = ({ item, tight }) => {
  if (item === "|") return <Rule />;
  const name = item.replace(/[>*]/g, "");
  return (
    <>
      <ToolButton $on={item.includes("*")} aria-label={name}>
        <Icon name={name} />
      </ToolButton>
      {item.endsWith(">") && <DropButton $tight={tight} aria-label={`${name} options`} />}
    </>
  );
};

/* ---------- page ---------- */

export default function App() {
  return (
    <Window>
      <Global />
      <TitleBar>
        <Icon name="app" />
        <WindowButtons>
          <button aria-label="Minimize"><Glyph size={12} d="M0 5.500h10" /></button>
          <button aria-label="Restore"><Glyph size={12} d="M1 3h6v6H1zM3 3V1h6v6H7" /></button>
          <button aria-label="Close"><Glyph size={12} d="M0 0l10 10M10 0L0 10" color="#444" /></button>
        </WindowButtons>
      </TitleBar>
      <MenuBar>
        {MENUS.map((m, i) => (
          <MenuItem key={m} $bold={i === 0}>{m}</MenuItem>
        ))}
      </MenuBar>
      <ToolBar>
        {TOOLS.map((g, i) => (
          <ToolGroup key={i} $apart={g.apart}>
            {g.items.map((t, k) => (
              <Tool key={k} item={t} tight={g.tight} />
            ))}
          </ToolGroup>
        ))}
      </ToolBar>

      <Body>
        <SideDock>
          {SIDE.map((s, i) => (
            <SideTab key={s.name} $h={s.h} $last={i === SIDE.length - 1}>
              <Icon name={s.icon} />
              <span>{s.name}</span>
            </SideTab>
          ))}
        </SideDock>

        <Content>
          <PanelTitle $top>
            <span>Modules</span>
            <button aria-label="Pin"><Glyph d={PIN} /></button>
            <button aria-label="Close panel"><Glyph d={CROSS} weight={1.6} /></button>
          </PanelTitle>
          <TabRow>
            <Tab $nav $pad={6} aria-label="All catalogs"><Glyph size={8} weight={1.6} d="M2 3l3 3 3-3" /></Tab>
            <Tab $nav $pad={6} aria-label="Previous"><Glyph size={8} weight={1.5} color="#666" d="M7 2L4 5l3 3" /></Tab>
            <CatalogTab $pad={4}><Icon name="hexagon" />Catalog3D</CatalogTab>
            {CATALOGS.map((c) => (
              <Tab key={c} $on={c === "Composition"} $pad={tabPad(8, c)}>{c}</Tab>
            ))}
            <Tab $nav $pad={6} aria-label="Next"><Glyph size={8} weight={1.6} d="M3 2l3 3-3 3" /></Tab>
          </TabRow>
          <TabRow $second>
            {GROUPS.map((c, i) => (
              <Tab key={c} $on={i === 0} $pad={tabPad(6, c)}>{c}</Tab>
            ))}
          </TabRow>

          <ModuleList>
            <ModuleGrid>
              <Module>
                <Thumb>
                  <path d="M0 36l48-11 15 7L8 51z" fill="#cfcfcf" />
                  <path d="M0 36l46-11 4 2L2 40z" fill="#dadad2" />
                  <path d="M1 38l47-12" stroke="#111" strokeWidth="1.500" />
                </Thumb>
                <span>Straight w/ slot (001)</span>
              </Module>
              <Module $on>
                <Thumb>
                  <path d="M1 34l44-12 17 9L9 51z" fill="#97aec8" />
                </Thumb>
                <span>Straight w/o Slot (002)</span>
              </Module>
              <Module>
                <Thumb>
                  <path d="M0 39l30-10 34 9-12 10-19-8-17 9z" fill="#dcdcda" />
                  <path d="M30 29l34 9-12 10-19-8z" fill="#cbcbc6" />
                  <path d="M16 49l17-9M52 48l12-10" stroke="#8f8f86" />
                </Thumb>
                <span>Corner L (003)</span>
              </Module>
              <Counter>2/3</Counter>
            </ModuleGrid>
          </ModuleList>

          <ModuleTools>
            <ModuleToolGroup>
              {["sortUp", "|", "plank>", "|", "goto", "binoc", "replaceOff"].map((t, i) => (
                <Tool key={i} item={t} tight />
              ))}
            </ModuleToolGroup>
            <ScrollTrack>
              <button aria-label="Scroll left"><Glyph color="#b5b5b5" weight={1.6} d="M7 1L3 5l4 4" /></button>
              <button aria-label="Scroll right"><Glyph color="#b5b5b5" weight={1.6} d="M3 1l4 4-4 4" /></button>
            </ScrollTrack>
          </ModuleTools>

          <WorkRow>
            <DocFrame>
              <Viewport>
                <Room />
              </Viewport>
              <DocTabs>
                <DocTabGroup>
                  <LabelButton><Icon name="page" />Customers Data</LabelButton>
                  <LabelButton $on><Icon name="folder" />Project</LabelButton>
                </DocTabGroup>
                <DocTabGroup>
                  <LabelButton $on><Icon name="design" />Design</LabelButton>
                  <Spacer />
                  <button aria-label="Close document"><Glyph size={8} weight={1.6} color="#8d8d8d" d={CROSS} /></button>
                </DocTabGroup>
              </DocTabs>
            </DocFrame>

            <Properties>
              <PanelTitle>
                <span>Tools - Properties</span>
                <button aria-label="Pin tools"><Glyph d={PIN} weight={1.5} /></button>
              </PanelTitle>
              <PropsTitle><Icon name="props" />Properties</PropsTitle>
              <PropsBox>
                <PropsTools>
                  <LabelButton><Icon name="advanced" />Advanced</LabelButton>
                  <Rule />
                  <ToolButton aria-label="Categories"><Icon name="rows" /></ToolButton>
                  <ToolButton aria-label="Table"><Icon name="tableview" /></ToolButton>
                  <Spacer />
                  <Rule />
                </PropsTools>
                <PropsTab>General</PropsTab>
                <PropsPage>
                  <SectionHead>
                    <Icon name="dims" />
                    Dimensions
                    <Spacer />
                    <Collapse><Glyph weight={1.3} color="#234" d="M2 5l3-3 3 3M2 9l3-3 3 3" /></Collapse>
                  </SectionHead>
                  {VALUES.map(([k, v]) => (
                    <PropRow key={k}>
                      <label htmlFor={k}>{k}</label>
                      <input id={k} defaultValue={v} />
                    </PropRow>
                  ))}
                </PropsPage>
              </PropsBox>
            </Properties>
          </WorkRow>

          <BottomDock>
            <DockTab><Icon name="materials" />Materials</DockTab>
            <DockTab><Icon name="replace" />Replace</DockTab>
            <DockTab $last><Icon name="command" />Command Line</DockTab>
          </BottomDock>
        </Content>
      </Body>

      <StatusBar>
        <output>
          Selected: Wall -&gt; Wall (4850x150x2600) - (Area: 12,61 m<sup>2</sup>) - (Normal: 0; 0; 1 Rotation: 0)
        </output>
        <LabelButton><Icon name="glasses" />Show<DropButton as="span" /></LabelButton>
        <LabelButton $on><Icon name="collision" />Collision</LabelButton>
        <LabelButton $on><Icon name="joints" />Joints</LabelButton>
        <LabelButton><Icon name="lower" />Auto Lower</LabelButton>
        <ToolButton aria-label="Settings"><Icon name="wrench" /></ToolButton>
      </StatusBar>
    </Window>
  );
}
